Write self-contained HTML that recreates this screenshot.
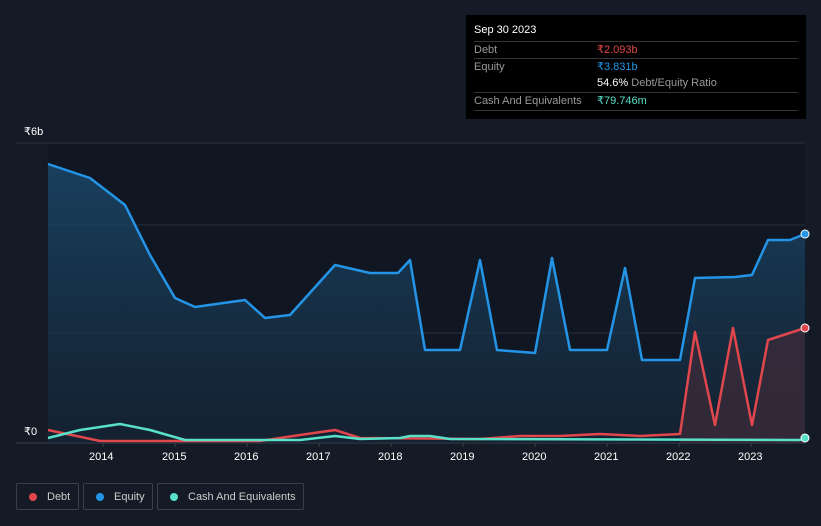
<!DOCTYPE html>
<html><head><style>
body{margin:0;width:821px;height:526px;background:#151b26;font-family:"Liberation Sans",sans-serif;overflow:hidden;position:relative}
.tip{position:absolute;left:466px;top:15px;width:340px;height:104px;background:#000;color:#fff;font-size:11px}
.row{position:absolute;left:8px;width:324px;border-top:1px solid #333;height:17px;line-height:17px;color:#999}
.leg{position:absolute;top:483px;height:27px;border:1px solid #3a404a;border-radius:2px;color:#ccc;font-size:11px;line-height:27px;box-sizing:border-box}
.dot{display:inline-block;width:8px;height:8px;border-radius:50%;margin:0 10px 0 12px;vertical-align:-0.5px}
.ax{position:absolute;color:#fff;font-size:11px}
</style></head><body>
<svg width="821" height="526" style="position:absolute;left:0;top:0">
<rect x="48" y="143" width="757" height="300" fill="#111722"/>
<line x1="16" y1="143" x2="805" y2="143" stroke="#2a303a"/>
<line x1="48" y1="225" x2="805" y2="225" stroke="#2a303a"/>
<line x1="48" y1="333" x2="805" y2="333" stroke="#2a303a"/>
<line x1="16" y1="443" x2="805" y2="443" stroke="#3a404a"/>
<defs><linearGradient id="g" x1="0" y1="0" x2="0" y2="1"><stop offset="0" stop-color="#1a4a6e" stop-opacity=".8"/><stop offset="1" stop-color="#16283a" stop-opacity=".6"/></linearGradient></defs>
<polygon fill="url(#g)" points="48,164 90,178 125,205 150,255 175,298 195,307 245,300 265,318 290,315 335,265 370,273 398,273 410,260 425,350 460,350 480,260 497,350 535,353 552,258 570,350 607,350 625,268 642,360 680,360 695,278 735,277 752,275 768,240 790,240 805,234 805,443 48,443"/>
<polygon fill="#3a2a3a" opacity=".8" points="680,434 695,332 715,425 733,328 752,425 768,340 805,328 805,443 680,443"/>
<polyline fill="none" stroke="#2394e6" stroke-width="2.5" stroke-linejoin="round" points="48,164 90,178 125,205 150,255 175,298 195,307 245,300 265,318 290,315 335,265 370,273 398,273 410,260 425,350 460,350 480,260 497,350 535,353 552,258 570,350 607,350 625,268 642,360 680,360 695,278 735,277 752,275 768,240 790,240 805,234"/>
<polyline fill="none" stroke="#e0474c" stroke-width="2.5" stroke-linejoin="round" points="48,430 100,441 260,441 300,435 335,430 360,438 480,439 520,436 560,436 600,434 640,436 680,434 695,332 715,425 733,328 752,425 768,340 805,328"/>
<polyline fill="none" stroke="#58e0c8" stroke-width="2.5" stroke-linejoin="round" points="48,438 80,430 120,424 150,430 185,440 300,440 335,436 360,439 400,438 410,436 430,436 450,439 800,440 805,438"/>
<circle cx="805" cy="234" r="4" fill="#2394e6" stroke="#fff"/>
<circle cx="805" cy="328" r="4" fill="#e0474c" stroke="#fff"/>
<circle cx="805" cy="438" r="4" fill="#58e0c8" stroke="#fff"/>
<g stroke="#3a404a"><line x1="103" y1="443" x2="103" y2="447"/><line x1="175" y1="443" x2="175" y2="447"/><line x1="247" y1="443" x2="247" y2="447"/><line x1="319" y1="443" x2="319" y2="447"/><line x1="391" y1="443" x2="391" y2="447"/><line x1="463" y1="443" x2="463" y2="447"/><line x1="535" y1="443" x2="535" y2="447"/><line x1="607" y1="443" x2="607" y2="447"/><line x1="679" y1="443" x2="679" y2="447"/><line x1="751" y1="443" x2="751" y2="447"/></g>
</svg>
<div class="ax" style="left:24px;top:125px">₹6b</div>
<div class="ax" style="left:24px;top:425px">₹0</div>
<div class="ax" style="left:89px;top:451px">2014</div>
<div class="ax" style="left:162px;top:451px">2015</div>
<div class="ax" style="left:234px;top:451px">2016</div>
<div class="ax" style="left:306px;top:451px">2017</div>
<div class="ax" style="left:378px;top:451px">2018</div>
<div class="ax" style="left:450px;top:451px">2019</div>
<div class="ax" style="left:522px;top:451px">2020</div>
<div class="ax" style="left:594px;top:451px">2021</div>
<div class="ax" style="left:666px;top:451px">2022</div>
<div class="ax" style="left:738px;top:451px">2023</div>
<div class="tip">
<div style="position:absolute;left:8px;top:9px">Sep 30 2023</div>
<div class="row" style="top:26px">Debt<span style="position:absolute;left:123px;color:#e0474c">₹2.093b</span></div>
<div class="row" style="top:43px">Equity<span style="position:absolute;left:123px;color:#2394e6">₹3.831b</span></div>
<div class="row" style="top:60px;border:0"><span style="position:absolute;left:123px"><b style="color:#fff;font-weight:normal">54.6%</b> Debt/Equity Ratio</span></div>
<div class="row" style="top:77px;border-bottom:1px solid #333">Cash And Equivalents<span style="position:absolute;left:123px;color:#58e0c8">₹79.746m</span></div>
</div>
<div class="leg" style="left:16px;width:63px"><span class="dot" style="background:#e0474c"></span>Debt</div>
<div class="leg" style="left:83px;width:70px"><span class="dot" style="background:#2394e6"></span>Equity</div>
<div class="leg" style="left:157px;width:147px"><span class="dot" style="background:#58e0c8"></span>Cash And Equivalents</div>
</body></html>
